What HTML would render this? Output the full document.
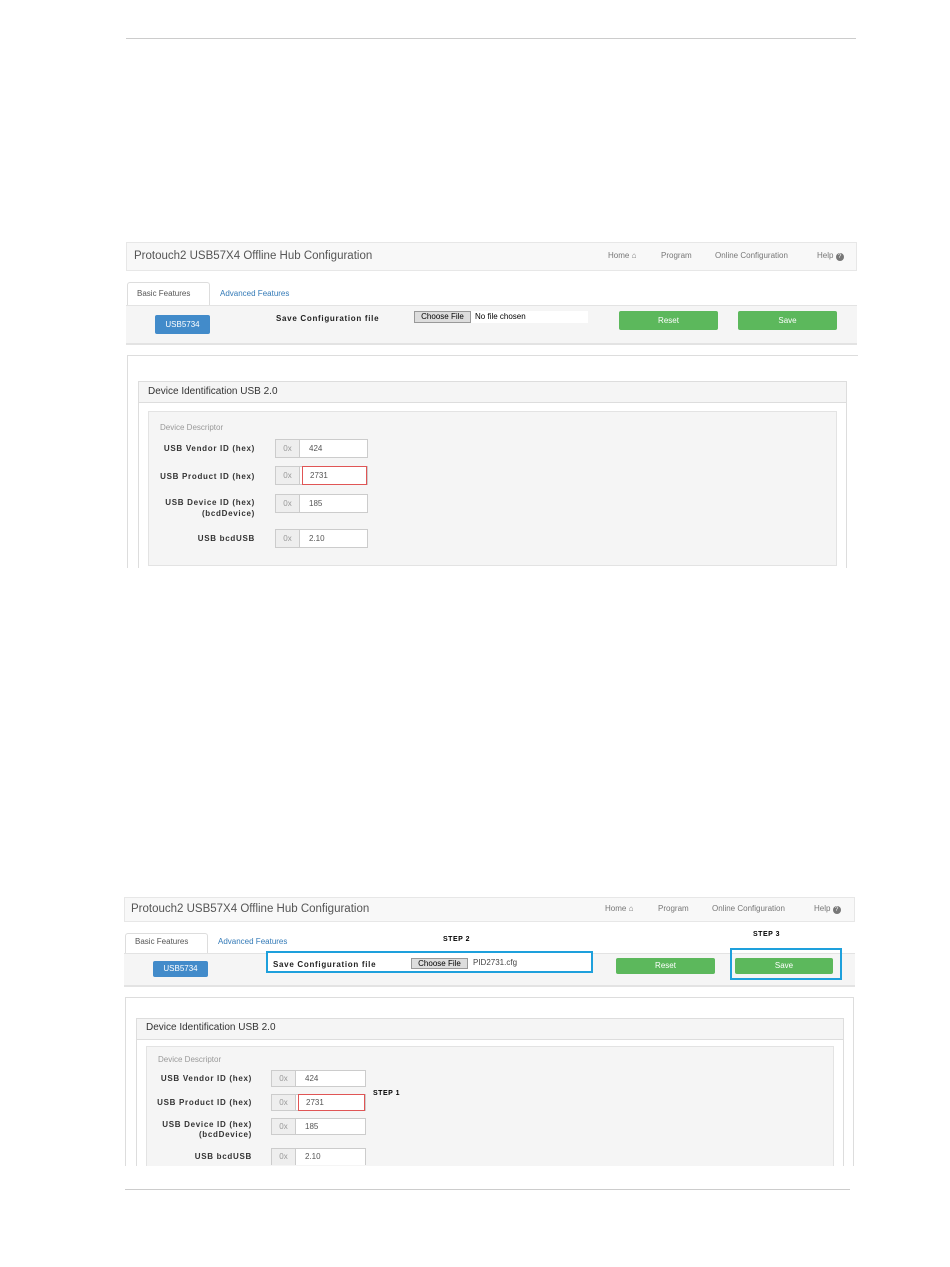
<!DOCTYPE html>
<html><head><meta charset="utf-8"><style>
*{box-sizing:border-box;margin:0;padding:0}
body{width:950px;height:1267px;background:#fff;position:relative;font-family:"Liberation Sans",sans-serif;overflow:hidden}
.a{position:absolute}
.t{position:absolute;white-space:nowrap;line-height:1}
.nav{background:#f8f8f8;border:1px solid #e7e7e7}
.g{background:#5cb85c;border-radius:2px;color:#fff;font-size:8px;text-align:center}
.b{background:#428bca;border-radius:2px;color:#fff;font-size:8px;text-align:center}
.lbl{position:absolute;font-size:8px;font-weight:bold;color:#333;text-align:right;line-height:11px;letter-spacing:.7px;white-space:nowrap}
.ig{position:absolute;height:19px;border:1px solid #ccc;background:#fff;font-size:8px;color:#555}
.ig .ad{position:absolute;left:0;top:0;bottom:0;width:24px;background:#eee;border-right:1px solid #ccc;text-align:center;line-height:17px;color:#999}
.ig .v{position:absolute;left:33px;top:0;line-height:17px}
.step{font-size:7px;font-weight:bold;color:#000;letter-spacing:.5px}
.blue{position:absolute;border:2px solid #1ea0dc}
.ttl{font-size:11.5px;color:#555}
.sc{font-size:8px;font-weight:bold;color:#222;letter-spacing:.7px}
</style></head><body>
<div class="a" style="left:126px;top:38px;width:730px;height:1px;background:#ccc"></div>

<!-- Screenshot 1 -->
<div class="a nav" style="left:126px;top:242px;width:731px;height:29px"></div>
<div class="t ttl" style="left:134px;top:251px">Protouch2 USB57X4 Offline Hub Configuration</div>
<div class="t" style="left:608px;top:252px;font-size:8px;color:#777">Home &#8962;</div>
<div class="t" style="left:661px;top:252px;font-size:8px;color:#777">Program</div>
<div class="t" style="left:715px;top:252px;font-size:8px;color:#777">Online Configuration</div>
<div class="t" style="left:817px;top:252px;font-size:8px;color:#777">Help <span style="display:inline-block;width:8px;height:8px;border-radius:50%;background:#777;color:#fff;font-size:6px;text-align:center;line-height:8px">?</span></div>
<div class="a" style="left:127px;top:282px;width:83px;height:24px;border:1px solid #ddd;border-bottom:none;background:#fff;border-radius:3px 3px 0 0"></div>
<div class="t" style="left:137px;top:290px;font-size:8px;color:#555">Basic Features</div>
<div class="t" style="left:220px;top:290px;font-size:8px;color:#337ab7">Advanced Features</div>
<div class="a" style="left:126px;top:305px;width:731px;height:40px;background:#f5f5f5;border-top:1px solid #e3e3e3;border-bottom:2px solid #e3e3e3"></div>
<div class="a b" style="left:155px;top:315px;width:55px;height:19px;line-height:19px">USB5734</div>
<div class="t sc" style="left:276px;top:315px">Save Configuration file</div>
<div class="a" style="left:414px;top:311px;width:174px;height:12px;background:#fff"></div>
<div class="a" style="left:414px;top:311px;width:57px;height:12px;background:#ddd;border:1px solid #999;font-size:8px;line-height:10px;text-align:center;color:#000">Choose File</div>
<div class="t" style="left:475px;top:313px;font-size:8px;color:#000">No file chosen</div>
<div class="a g" style="left:619px;top:311px;width:99px;height:19px;line-height:19px">Reset</div>
<div class="a g" style="left:738px;top:311px;width:99px;height:19px;line-height:19px">Save</div>
<div class="a" style="left:127px;top:355px;width:731px;height:213px;border:1px solid #ddd;border-right:none;border-bottom:none"></div>
<div class="a" style="left:138px;top:381px;width:709px;height:187px;border:1px solid #ddd;border-bottom:none"></div>
<div class="a" style="left:139px;top:382px;width:707px;height:21px;background:#f5f5f5;border-bottom:1px solid #ddd"></div>
<div class="t" style="left:148px;top:387px;font-size:10px;color:#333">Device Identification USB 2.0</div>
<div class="a" style="left:148px;top:411px;width:689px;height:155px;background:#f5f5f5;border:1px solid #e3e3e3"></div>
<div class="t" style="left:160px;top:424px;font-size:8px;color:#999">Device Descriptor</div>
<div class="lbl" style="right:695px;top:443px">USB Vendor ID (hex)</div>
<div class="ig" style="left:275px;top:439px;width:93px"><div class="ad">0x</div><div class="v">424</div></div>
<div class="lbl" style="right:695px;top:471px">USB Product ID (hex)</div>
<div class="ig" style="left:275px;top:466px;width:93px"><div class="ad">0x</div><div class="v" style="left:26px;right:0;top:-1px;bottom:-1px;border:1px solid #e05555;padding-left:7px;line-height:17px;position:absolute">2731</div></div>
<div class="lbl" style="right:695px;top:497px">USB Device ID (hex)<br>(bcdDevice)</div>
<div class="ig" style="left:275px;top:494px;width:93px"><div class="ad">0x</div><div class="v">185</div></div>
<div class="lbl" style="right:695px;top:533px">USB bcdUSB</div>
<div class="ig" style="left:275px;top:529px;width:93px"><div class="ad">0x</div><div class="v">2.10</div></div>

<!-- Screenshot 2 -->
<div class="a nav" style="left:124px;top:897px;width:731px;height:25px"></div>
<div class="t ttl" style="left:131px;top:904px">Protouch2 USB57X4 Offline Hub Configuration</div>
<div class="t" style="left:605px;top:905px;font-size:8px;color:#777">Home &#8962;</div>
<div class="t" style="left:658px;top:905px;font-size:8px;color:#777">Program</div>
<div class="t" style="left:712px;top:905px;font-size:8px;color:#777">Online Configuration</div>
<div class="t" style="left:814px;top:905px;font-size:8px;color:#777">Help <span style="display:inline-block;width:8px;height:8px;border-radius:50%;background:#777;color:#fff;font-size:6px;text-align:center;line-height:8px">?</span></div>
<div class="a" style="left:125px;top:933px;width:83px;height:21px;border:1px solid #ddd;border-bottom:none;background:#fff;border-radius:3px 3px 0 0"></div>
<div class="t" style="left:135px;top:938px;font-size:8px;color:#555">Basic Features</div>
<div class="t" style="left:218px;top:938px;font-size:8px;color:#337ab7">Advanced Features</div>
<div class="t step" style="left:443px;top:936px">STEP 2</div>
<div class="t step" style="left:753px;top:931px">STEP 3</div>
<div class="a" style="left:124px;top:953px;width:731px;height:34px;background:#f5f5f5;border-top:1px solid #e3e3e3;border-bottom:2px solid #e3e3e3"></div>
<div class="a b" style="left:153px;top:961px;width:55px;height:16px;line-height:16px">USB5734</div>
<div class="a" style="left:268px;top:953px;width:324px;height:19px;background:#fff"></div>
<div class="blue" style="left:266px;top:951px;width:327px;height:22px"></div>
<div class="t sc" style="left:273px;top:961px">Save Configuration file</div>
<div class="a" style="left:411px;top:958px;width:57px;height:11px;background:#ddd;border:1px solid #999;font-size:8px;line-height:9px;text-align:center;color:#000">Choose File</div>
<div class="t" style="left:473px;top:959px;font-size:8px;color:#444">PID2731.cfg</div>
<div class="a g" style="left:616px;top:958px;width:99px;height:16px;line-height:16px">Reset</div>
<div class="a g" style="left:735px;top:958px;width:98px;height:16px;line-height:16px">Save</div>
<div class="blue" style="left:730px;top:948px;width:112px;height:32px"></div>
<div class="a" style="left:125px;top:997px;width:729px;height:170px;border:1px solid #ddd;border-bottom:none"></div>
<div class="a" style="left:136px;top:1018px;width:708px;height:149px;border:1px solid #ddd;border-bottom:none"></div>
<div class="a" style="left:137px;top:1019px;width:706px;height:21px;background:#f5f5f5;border-bottom:1px solid #ddd"></div>
<div class="t" style="left:146px;top:1023px;font-size:10px;color:#333">Device Identification USB 2.0</div>
<div class="a" style="left:146px;top:1046px;width:688px;height:121px;background:#f5f5f5;border:1px solid #e3e3e3;border-bottom:none"></div>
<div class="t" style="left:158px;top:1056px;font-size:8px;color:#999">Device Descriptor</div>
<div class="lbl" style="right:698px;top:1073px">USB Vendor ID (hex)</div>
<div class="ig" style="left:271px;top:1070px;width:95px;height:17px"><div class="ad" style="line-height:15px">0x</div><div class="v" style="line-height:15px">424</div></div>
<div class="t step" style="left:373px;top:1090px">STEP 1</div>
<div class="lbl" style="right:698px;top:1097px">USB Product ID (hex)</div>
<div class="ig" style="left:271px;top:1094px;width:95px;height:17px"><div class="ad" style="line-height:15px">0x</div><div class="v" style="left:26px;right:0;top:-1px;bottom:-1px;border:1px solid #e05555;padding-left:7px;line-height:15px;position:absolute">2731</div></div>
<div class="lbl" style="right:698px;top:1120px;line-height:10px">USB Device ID (hex)<br>(bcdDevice)</div>
<div class="ig" style="left:271px;top:1118px;width:95px;height:17px"><div class="ad" style="line-height:15px">0x</div><div class="v" style="line-height:15px">185</div></div>
<div class="lbl" style="right:698px;top:1151px">USB bcdUSB</div>
<div class="ig" style="left:271px;top:1148px;width:95px;height:17px;border-bottom:none"><div class="ad" style="line-height:15px">0x</div><div class="v" style="line-height:15px">2.10</div></div>
<div class="a" style="left:124px;top:1166px;width:734px;height:6px;background:#fff"></div>
<div class="a" style="left:125px;top:1189px;width:725px;height:1px;background:#ccc"></div>
</body></html>
